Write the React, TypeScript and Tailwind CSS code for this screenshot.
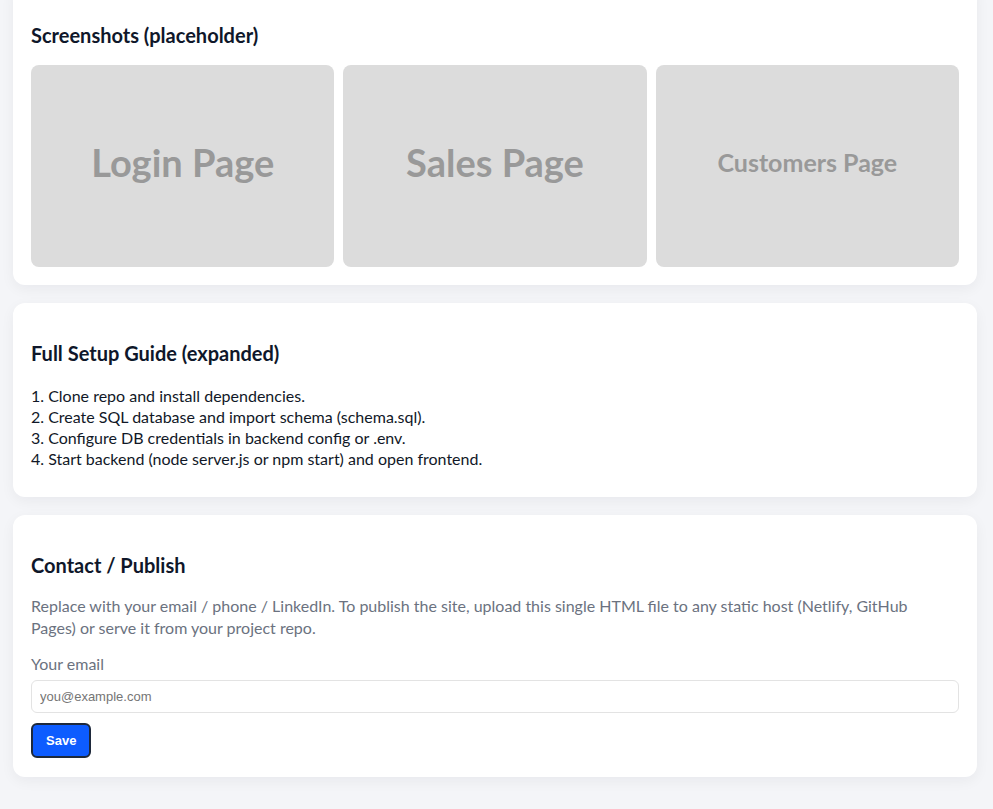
import React from 'react';

const shots = [
  { label: 'Login Page', size: 'text-[38px]' },
  { label: 'Sales Page', size: 'text-[38px]' },
  { label: 'Customers Page', size: 'text-[25px]' },
];

const steps = [
  'Clone repo and install dependencies.',
  'Create SQL database and import schema (schema.sql).',
  'Configure DB credentials in backend config or .env.',
  'Start backend (node server.js or npm start) and open frontend.',
];

function Card({ children, className = '' }: { children: React.ReactNode; className?: string }) {
  return (
    <section className={`bg-white rounded-xl shadow-[0_4px_14px_rgba(15,23,42,0.05)] px-[18px] ${className}`}>
      {children}
    </section>
  );
}

export default function App() {
  return (
    <div className="min-h-screen bg-[#f4f5f8] pl-[13px] pr-[16px] pb-8 font-['Lato','Noto_Sans',sans-serif] text-[#0f172a] overflow-hidden">
      <div className="flex flex-col gap-[18px] -mt-[20px]">
        <Card className="pt-[40px] pb-[18px]">
          <h2 className="text-[20px] font-bold leading-[30px] mb-[15px]">Screenshots (placeholder)</h2>
          <div className="grid grid-cols-3 gap-[9px]">
            {shots.map((s) => (
              <div
                key={s.label}
                className="h-[202px] rounded-lg bg-[#dcdcdc] flex items-center justify-center pb-[7px]"
              >
                <span className={`${s.size} font-bold text-[#999999]`}>{s.label}</span>
              </div>
            ))}
          </div>
        </Card>

        <Card className="pt-[35px] pb-[28px]">
          <h2 className="text-[20px] font-bold leading-[30px] mb-[17px]">Full Setup Guide (expanded)</h2>
          <ol className="text-[16px] leading-[21px] text-[#111827]">
            {steps.map((t, i) => (
              <li key={i}>
                {i + 1}. {t}
              </li>
            ))}
          </ol>
        </Card>

        <Card className="pt-[35px] pb-[19px]">
          <h2 className="text-[20px] font-bold leading-[30px] mb-[15px]">Contact / Publish</h2>
          <p className="text-[16px] leading-[22px] text-[#6b7280] pr-[30px]">
            Replace with your email / phone / LinkedIn. To publish the site, upload this single HTML file to any static host (Netlify, GitHub Pages) or serve it from your project repo.
          </p>
          <label className="block mt-[14px] text-[16px] leading-[22px] text-[#6b7280]">Your email</label>
          <input
            type="email"
            placeholder="you@example.com"
            className="mt-[5px] block w-full h-[33px] rounded-md border border-[#e3e3e3] px-2 text-[13px] font-['Liberation_Sans','Arial',sans-serif] placeholder:text-[#757575] outline-none"
          />
          <button className="mt-[10px] h-[35px] px-[13px] rounded-md bg-[#0d5cff] border-2 border-[#1e293b] text-white text-[13px] font-bold font-['Liberation_Sans','Arial',sans-serif]">
            Save
          </button>
        </Card>
      </div>
    </div>
  );
}
